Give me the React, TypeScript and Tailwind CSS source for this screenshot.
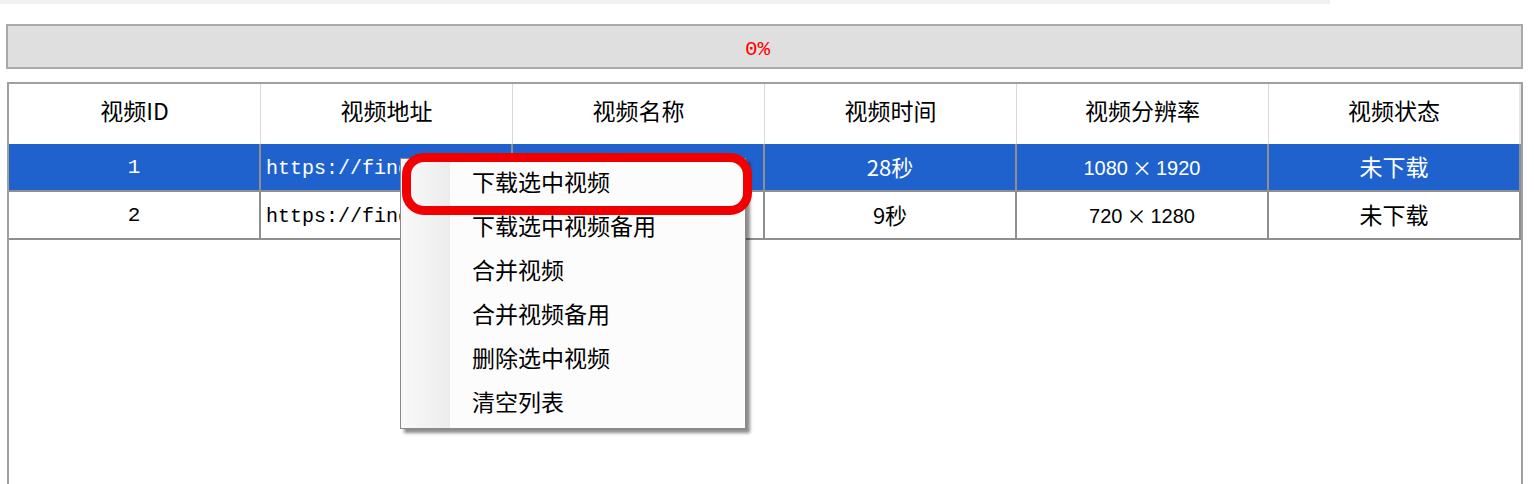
import React from "react";

const cjk = { fontFamily: '"Noto Sans CJK SC", "Noto Sans", sans-serif' };
const mono = { fontFamily: '"Liberation Mono", "DejaVu Sans Mono", monospace' };
const sans = { fontFamily: '"Liberation Sans", "Noto Sans CJK SC", sans-serif' };

const headers = ["视频ID", "视频地址", "视频名称", "视频时间", "视频分辨率", "视频状态"];

const rows = [
  { id: "1", url: "https://finder.video.qq.com/251/20302", name: "", time: "28秒", res: ["1080", "1920"], status: "未下载", sel: true },
  { id: "2", url: "https://finder.video.qq.com/251/20302", name: "", time: "9秒", res: ["720", "1280"], status: "未下载", sel: false },
];

const menuItems = ["下载选中视频", "下载选中视频备用", "合并视频", "合并视频备用", "删除选中视频", "清空列表"];

export default function App() {
  return (
    <div className="relative w-[1534px] h-[484px] overflow-hidden bg-white" style={cjk}>
      <div className="h-[4px] w-[1330px] bg-[#f0f0f0]" />
      <div className="pt-[20px] pl-[6px]">
        <div className="w-[1517px] h-[45px] border-2 border-[#a9a9a9] bg-[#dfdfdf] flex items-center justify-center pt-[5px] pr-[14px]">
          <span className="text-[#ff0000] text-[21px] leading-none" style={mono}>0%</span>
        </div>
      </div>
      <div className="pt-[13px] pl-[7px]">
        <div className="w-[1516px] h-[420px] border-2 border-[#a0a0a0] border-b-0">
          <div className="flex h-[60px]">
            {headers.map((h, i) => (
              <div
                key={h}
                className={`w-[252px] flex items-center justify-center pb-[7px] text-[23px] text-black ${i < 5 ? "border-r border-[#d8d8d8]" : "border-r-2 border-r-[#e6e6e6]"}`}
              >
                {h}
              </div>
            ))}
          </div>
          {rows.map((r) => {
            return (
              <div
                key={r.id}
                className={`flex h-[48px] border-b-2 border-[#8f8f8f] ${r.sel ? "bg-[#1f62cd] text-white" : "bg-white text-black"}`}
              >
                <div className="w-[252px] border-r-2 border-[#8f8f8f] flex items-center justify-center pt-[2px]">
                  <span className="text-[21px]" style={mono}>{r.id}</span>
                </div>
                <div className="w-[252px] border-r-2 border-[#8f8f8f] flex items-center justify-start pl-[5px] pt-[3px] overflow-hidden whitespace-nowrap">
                  <span className="text-[20px]" style={mono}>{r.url}</span>
                </div>
                <div className="w-[252px] border-r-2 border-[#8f8f8f]" />
                <div className="w-[252px] border-r-2 border-[#8f8f8f] flex items-center justify-center pb-[1px]">
                  <span className="text-[22px]">{r.time}</span>
                </div>
                <div className="w-[252px] border-r-2 border-[#8f8f8f] flex items-center justify-center pt-[2px] whitespace-nowrap">
                  <span className="text-[20px]" style={sans}>{r.res[0]}</span>
                  <span className="text-[20px] mx-[4px]" style={cjk}>×</span>
                  <span className="text-[20px]" style={sans}>{r.res[1]}</span>
                </div>
                <div className="w-[252px] border-r-2 border-[#8f8f8f] flex items-center justify-center pb-[1px]">
                  <span className="text-[23px]">{r.status}</span>
                </div>
              </div>
            );
          })}
        </div>
      </div>

      {/* context menu */}
      <div className="absolute left-[400px] top-[158px] w-[346px] h-[271px] border border-[#8a8a8a] bg-[#fcfcfc] shadow-[4px_4px_3px_rgba(0,0,0,0.45)] flex">
        <div className="w-[49px] h-full bg-gradient-to-r from-[#f9f9f9] to-[#ececec]" />
        <div className="flex-1">
          {menuItems.map((m) => (
            <div key={m} className="h-[44px] flex items-center pl-[22px] text-[23px] text-black leading-none">
              {m}
            </div>
          ))}
        </div>
      </div>

      {/* red highlight */}
      <div className="absolute left-[402px] top-[153px] w-[350px] h-[62px] border-[9px] border-[#f00000] rounded-[22px]" />
    </div>
  );
}
